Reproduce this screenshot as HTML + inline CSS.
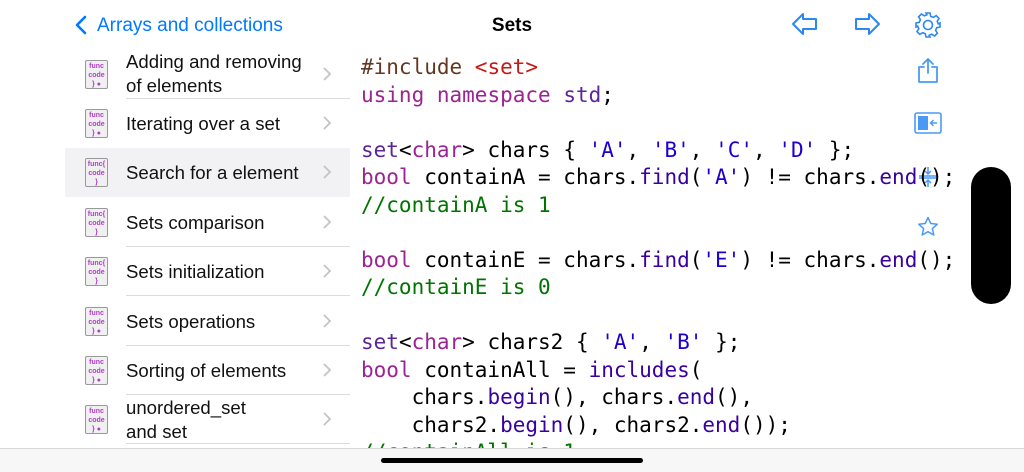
<!DOCTYPE html>
<html><head><meta charset="utf-8"><style>
*{margin:0;padding:0;box-sizing:border-box}
body{width:1024px;height:472px;overflow:hidden;background:#fff;font-family:"Liberation Sans",Helvetica,Arial,sans-serif;position:relative}
.nav{position:absolute;top:0;left:0;width:1024px;height:48px}
.back{position:absolute;left:74px;top:15px;color:#007aff;font-size:19px}
.title{position:absolute;left:0;width:1024px;top:15px;text-align:center;font-weight:bold;font-size:19px;color:#000}
.row{position:absolute;left:65px;width:285px;height:49px}
.row.sel{background:#f2f2f4}
.row .t{position:absolute;left:61px;font-size:18.6px;color:#111;line-height:24px}
.row .sep{position:absolute;left:61px;right:0;bottom:0;height:1px;background:#dcdcdc}
.row .chev{position:absolute;left:258px;top:17px;width:9px;height:14px}
.icon{position:absolute;left:20px;top:10px;width:23px;height:29px;border:1px solid #999;border-radius:2px;background:#f0f0f0;font-size:7px;font-weight:bold;line-height:9px;text-align:center;color:#b040c8;font-family:"Liberation Sans",sans-serif;padding-top:1px}
.code{position:absolute;left:361px;top:54px;font-family:"DejaVu Sans Mono",monospace;font-size:21px;line-height:27.5px;white-space:pre;color:#000}
.k{color:#9b2393}.p{color:#5c2699}.s{color:#1c00cf}.c{color:#007400}.i{color:#643820}.r{color:#c41a16}.f{color:#3900a0}
.bar{position:absolute;left:0;top:448px;width:1024px;height:24px;background:#f7f7f7;border-top:1px solid #d8d8d8}
.home{position:absolute;left:381px;top:458px;width:262px;height:5px;border-radius:3px;background:#000}
.pill{position:absolute;left:971px;top:167px;width:40px;height:137px;border-radius:20px;background:#000}
svg{position:absolute}
</style></head><body>
<div class="nav">
<svg style="left:75px;top:15px" width="12" height="20" viewBox="0 0 12 20"><path d="M10 2 L2 10 L10 18" fill="none" stroke="#007aff" stroke-width="2.6" stroke-linecap="round" stroke-linejoin="round"/></svg>
<div class="back" style="left:97px">Arrays and collections</div>
<div class="title">Sets</div>
<svg style="left:791px;top:12px" width="27" height="24" viewBox="0 0 27 24"><path d="M2 12 L12 2 V7 H25 V17 H12 V22 Z" fill="none" stroke="#2d87f0" stroke-width="2" stroke-linejoin="round"/></svg>
<svg style="left:854px;top:12px" width="27" height="24" viewBox="0 0 27 24"><path d="M25 12 L15 2 V7 H2 V17 H15 V22 Z" fill="none" stroke="#2d87f0" stroke-width="2" stroke-linejoin="round"/></svg>
<svg style="left:914px;top:11px" width="28" height="28" viewBox="0 0 28 28"><g fill="none" stroke="#2d87f0" stroke-width="1.6"><circle cx="14" cy="14" r="4.5"/><path d="M12 2h4l.7 3.3 2.6 1.1 2.9-1.8 2.8 2.8-1.8 2.9 1.1 2.6L26 12v4l-3.3.7-1.1 2.6 1.8 2.9-2.8 2.8-2.9-1.8-2.6 1.1L16 26h-4l-.7-3.3-2.6-1.1-2.9 1.8-2.8-2.8 1.8-2.9-1.1-2.6L2 16v-4l3.3-.7 1.1-2.6-1.8-2.9 2.8-2.8 2.9 1.8 2.6-1.1z"/></g></svg>
</div>
<svg style="left:916px;top:57px" width="24" height="27" viewBox="0 0 24 27"><g fill="none" stroke="#4a9af5" stroke-width="1.8" stroke-linecap="round" stroke-linejoin="round"><path d="M12 16V2 M7 7l5-5 5 5"/><path d="M8 10H3v15h18V10h-5"/></g></svg>
<svg style="left:914px;top:112px" width="28" height="22" viewBox="0 0 28 22"><rect x="1" y="1" width="26" height="20" rx="2" fill="none" stroke="#4a9af5" stroke-width="1.6"/><rect x="4" y="4" width="10" height="14" fill="#4a9af5"/><path d="M23 11h-6 M19.5 8l-3 3 3 3" fill="none" stroke="#4a9af5" stroke-width="1.4"/></svg>
<svg style="left:917px;top:165px" width="22" height="24" viewBox="0 0 22 24"><g fill="none" stroke="#4a9af5" stroke-width="1.5"><path d="M2 11h18 M2 13h18 M11 2v7 M8 6l3 3 3-3 M11 22v-7 M8 18l3-3 3 3"/></g></svg>
<svg style="left:917px;top:216px" width="22" height="22" viewBox="0 0 22 22"><path d="M11 1.5l2.8 6 6.5.7-4.9 4.4 1.4 6.4L11 15.7 5.2 19l1.4-6.4L1.7 8.2l6.5-.7z" fill="none" stroke="#4a9af5" stroke-width="1.5" stroke-linejoin="round"/></svg>

<div class="row" style="top:50px"><div class="icon">func<br>code<br>} ●</div><div class="t" style="top:0">Adding and removing<br>of elements</div><svg class="chev" viewBox="0 0 9 14"><path d="M1 1l6 6-6 6" fill="none" stroke="#c4c4c7" stroke-width="1.8"/></svg><div class="sep"></div></div>
<div class="row" style="top:99px"><div class="icon">func<br>code<br>} ●</div><div class="t" style="top:13px">Iterating over a set</div><svg class="chev" viewBox="0 0 9 14"><path d="M1 1l6 6-6 6" fill="none" stroke="#c4c4c7" stroke-width="1.8"/></svg></div>
<div class="row sel" style="top:148px"><div class="icon">func{<br>code<br>}</div><div class="t" style="top:13px">Search for a element</div><svg class="chev" viewBox="0 0 9 14"><path d="M1 1l6 6-6 6" fill="none" stroke="#c4c4c7" stroke-width="1.8"/></svg></div>
<div class="row" style="top:198px"><div class="icon">func{<br>code<br>}</div><div class="t" style="top:13px">Sets comparison</div><svg class="chev" viewBox="0 0 9 14"><path d="M1 1l6 6-6 6" fill="none" stroke="#c4c4c7" stroke-width="1.8"/></svg><div class="sep"></div></div>
<div class="row" style="top:247px"><div class="icon">func{<br>code<br>}</div><div class="t" style="top:13px">Sets initialization</div><svg class="chev" viewBox="0 0 9 14"><path d="M1 1l6 6-6 6" fill="none" stroke="#c4c4c7" stroke-width="1.8"/></svg><div class="sep"></div></div>
<div class="row" style="top:297px"><div class="icon">func<br>code<br>} ●</div><div class="t" style="top:13px">Sets operations</div><svg class="chev" viewBox="0 0 9 14"><path d="M1 1l6 6-6 6" fill="none" stroke="#c4c4c7" stroke-width="1.8"/></svg><div class="sep"></div></div>
<div class="row" style="top:346px"><div class="icon">func<br>code<br>} ●</div><div class="t" style="top:13px">Sorting of elements</div><svg class="chev" viewBox="0 0 9 14"><path d="M1 1l6 6-6 6" fill="none" stroke="#c4c4c7" stroke-width="1.8"/></svg><div class="sep"></div></div>
<div class="row" style="top:395px"><div class="icon">func<br>code<br>} ●</div><div class="t" style="top:1px">unordered_set<br>and set</div><svg class="chev" viewBox="0 0 9 14"><path d="M1 1l6 6-6 6" fill="none" stroke="#c4c4c7" stroke-width="1.8"/></svg><div class="sep"></div></div>

<div class="code"><span class="i">#include </span><span class="r">&lt;set&gt;</span>
<span class="k">using</span> <span class="k">namespace</span> <span class="p">std</span>;

<span class="p">set</span>&lt;<span class="k">char</span>&gt; chars { <span class="s">'A'</span>, <span class="s">'B'</span>, <span class="s">'C'</span>, <span class="s">'D'</span> };
<span class="k">bool</span> containA = chars.<span class="f">find</span>(<span class="s">'A'</span>) != chars.<span class="f">end</span>();
<span class="c">//containA is 1</span>

<span class="k">bool</span> containE = chars.<span class="f">find</span>(<span class="s">'E'</span>) != chars.<span class="f">end</span>();
<span class="c">//containE is 0</span>

<span class="p">set</span>&lt;<span class="k">char</span>&gt; chars2 { <span class="s">'A'</span>, <span class="s">'B'</span> };
<span class="k">bool</span> containAll = <span class="f">includes</span>(
    chars.<span class="f">begin</span>(), chars.<span class="f">end</span>(),
    chars2.<span class="f">begin</span>(), chars2.<span class="f">end</span>());
<span class="c">//containAll is 1</span></div>
<div class="pill"></div>
<div class="bar"></div>
<div class="home"></div>
</body></html>
